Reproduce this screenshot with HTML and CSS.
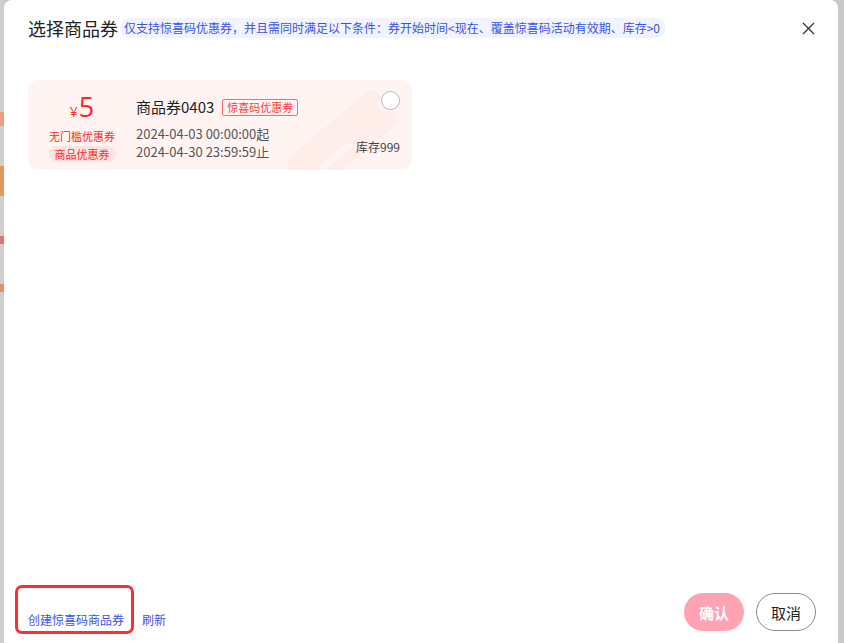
FILE: index.html
```html
<!DOCTYPE html>
<html>
<head>
  <title>选择商品券</title>
  <link rel="stylesheet" href="styles.css">
</head>
<body>

  <div class="backdrop">
    <div class="page-edge">
      <span class="bit bit-a"></span>
      <span class="bit bit-b"></span>
      <span class="bit bit-c"></span>
      <span class="bit bit-d"></span>
    </div>

    <div class="modal">
      <div class="modal-header">
        <h2 class="modal-title">选择商品券</h2>
        <span class="modal-tip">仅支持惊喜码优惠券，并且需同时满足以下条件：券开始时间&lt;现在、覆盖惊喜码活动有效期、库存&gt;0</span>
        <button class="close-btn" aria-label="关闭">
          <svg width="13" height="13" viewBox="0 0 13 13">
            <path d="M1 1 L12 12 M12 1 L1 12" stroke="#333" stroke-width="1.3" fill="none"/>
          </svg>
        </button>
      </div>

      <div class="modal-body">
        <div class="coupon">
          <svg class="coupon-mark" width="120" height="96" viewBox="0 0 120 96">
            <g transform="translate(62 56) rotate(-40)">
              <path d="M-55 -22 H45 a8 8 0 0 1 8 8 v6 a8 8 0 0 0 0 16 v6 a8 8 0 0 1 -8 8 H-55 a8 8 0 0 1 -8 -8 v-6 a8 8 0 0 0 0 -16 v-6 a8 8 0 0 1 8 -8 Z" fill="#ffede9"/>
              <rect x="-40" y="4" width="40" height="7" rx="3.5" fill="#fff4f2"/>
            </g>
          </svg>

          <div class="coupon-value">
            <div class="amount"><span class="yen">¥</span>5</div>
            <div class="threshold">无门槛优惠券</div>
            <div class="kind">商品优惠券</div>
          </div>

          <div class="coupon-info">
            <div class="coupon-name">
              商品券0403
              <span class="coupon-tag">惊喜码优惠券</span>
            </div>
            <div class="coupon-time">2024-04-03 00:00:00起</div>
            <div class="coupon-time">2024-04-30 23:59:59止</div>
          </div>

          <div class="coupon-side">
            <span class="radio"></span>
            <span class="stock">库存999</span>
          </div>
        </div>
      </div>

      <div class="modal-footer">
        <div class="footer-links">
          <a class="link" href="#">创建惊喜码商品券</a>
          <a class="link" href="#">刷新</a>
          <span class="mark-box"></span>
        </div>
        <div class="footer-btns">
          <button class="btn btn-ok" disabled>确认</button>
          <button class="btn btn-cancel">取消</button>
        </div>
      </div>
    </div>
  </div>

</body>
</html>
```

FILE: styles.css
```css
body {
  margin: 0;
  padding: 0;
  background-color: #c9c9c9;
  font-family: "Noto Sans CJK SC", "Noto Sans", Arial, sans-serif;
  overflow: hidden;
}

.backdrop {
  display: flex;
  height: 643px;
  padding-right: 6px;
}

/* sliver of the page behind the dialog */
.page-edge {
  width: 4px;
  background-color: #cfcfcf;
  display: flex;
  flex-direction: column;
  padding-top: 112px;
  gap: 40px;
}

.bit {
  display: block;
  width: 4px;
  height: 14px;
}

.bit-a { background-color: #e8a080; }
.bit-b { background-color: #dc9a60; height: 30px; }
.bit-c { background-color: #e07070; height: 8px; }
.bit-d { background-color: #e09070; height: 8px; }

.modal {
  flex: 1;
  background-color: #fff;
  border-radius: 8px 8px 0 0;
  display: flex;
  flex-direction: column;
}

.modal-header {
  display: flex;
  align-items: center;
  padding: 14px 23px 0 24px;
  height: 28px;
}

.modal-title {
  margin: 0;
  font-size: 18px;
  font-weight: normal;
  color: #222;
  line-height: 28px;
}

.modal-tip {
  margin-left: 2px;
  padding: 0 6px 0 4px;
  height: 20px;
  line-height: 20px;
  font-size: 12px;
  color: #3b52e8;
  background-color: #f1f4ff;
  border-radius: 10px;
}

.close-btn {
  margin-left: auto;
  border: none;
  background: none;
  padding: 0;
  width: 13px;
  height: 13px;
  cursor: pointer;
  display: flex;
}

.modal-body {
  flex: 1;
  padding: 38px 24px 0;
}

.coupon {
  position: relative;
  width: 384px;
  height: 90px;
  background-color: #fff4f2;
  border-radius: 10px;
  display: flex;
  overflow: hidden;
}

.coupon-mark {
  position: absolute;
  right: 8px;
  top: 2px;
}

.coupon-value {
  position: relative;
  width: 108px;
  display: flex;
  flex-direction: column;
  align-items: center;
  padding-top: 14px;
  color: #ff2626;
}

.amount {
  font-size: 27px;
  line-height: 26px;
  font-family: "Open Sans", Arial, sans-serif;
}

.yen {
  font-size: 14px;
  margin-right: 1px;
}

.threshold {
  font-size: 11px;
  line-height: 16px;
  margin-top: 3px;
}

.kind {
  font-size: 11px;
  line-height: 16px;
  margin-top: 2px;
  padding: 0 6px;
  background-color: #ffe3df;
  border-radius: 8px;
}

.coupon-info {
  position: relative;
  padding-top: 16px;
}

.coupon-name {
  display: flex;
  align-items: center;
  font-size: 15px;
  line-height: 22px;
  color: #222;
  margin-bottom: 7px;
}

.coupon-tag {
  margin-left: 8px;
  font-size: 11px;
  line-height: 15px;
  padding: 0 4px;
  color: #ff3b3b;
  border: 1px solid #ff6b6b;
  border-radius: 2px;
}

.coupon-time {
  font-size: 13px;
  line-height: 18px;
  color: #555;
}

.coupon-side {
  position: relative;
  margin-left: auto;
  padding: 11px 12px 0 0;
  display: flex;
  flex-direction: column;
  align-items: flex-end;
}

.radio {
  width: 17px;
  height: 17px;
  border: 1px solid #b8b8c0;
  border-radius: 50%;
  background-color: #fff;
}

.stock {
  margin-top: 28px;
  font-size: 12px;
  color: #444;
}

.modal-footer {
  display: flex;
  align-items: flex-end;
  justify-content: space-between;
  padding: 0 22px 12px 24px;
}

.footer-links {
  position: relative;
  display: flex;
  gap: 18px;
  padding-bottom: 2px;
}

.link {
  font-size: 12px;
  line-height: 18px;
  color: #3b52e8;
  text-decoration: none;
}

/* red frame drawn around the create link */
.mark-box {
  position: absolute;
  left: -13px;
  top: -26px;
  width: 113px;
  height: 43px;
  border: 3px solid #ff2d2d;
  border-radius: 7px;
}

.footer-btns {
  display: flex;
  gap: 12px;
}

.btn {
  width: 60px;
  height: 38px;
  border-radius: 19px;
  font-size: 15px;
  font-family: inherit;
  cursor: pointer;
}

.btn-ok {
  border: none;
  background-color: #ffa2b2;
  color: #fff;
  font-weight: bold;
}

.btn-cancel {
  background-color: #fff;
  border: 1px solid #8c8c8c;
  color: #222;
}
```
